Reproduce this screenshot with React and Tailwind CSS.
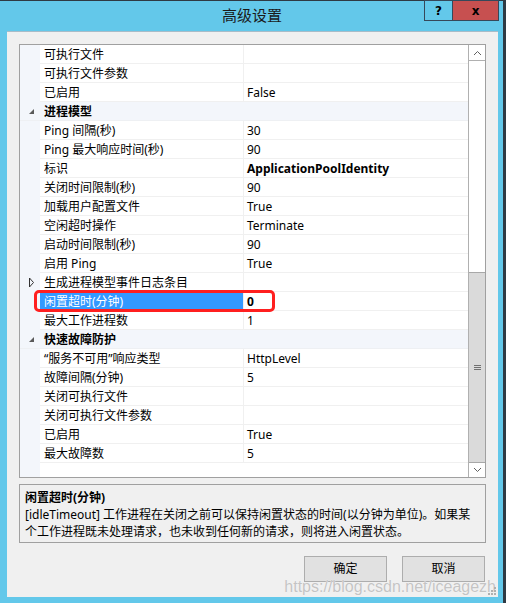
import React from "react";

const rows = [
  { name: "可执行文件", value: "" },
  { name: "可执行文件参数", value: "" },
  { name: "已启用", value: "False" },
  { category: "进程模型" },
  { name: "Ping 间隔(秒)", value: "30" },
  { name: "Ping 最大响应时间(秒)", value: "90" },
  { name: "标识", value: "ApplicationPoolIdentity", bold: true },
  { name: "关闭时间限制(秒)", value: "90" },
  { name: "加载用户配置文件", value: "True" },
  { name: "空闲超时操作", value: "Terminate" },
  { name: "启动时间限制(秒)", value: "90" },
  { name: "启用 Ping", value: "True" },
  { name: "生成进程模型事件日志条目", value: "", collapsed: true },
  { name: "闲置超时(分钟)", value: "0", bold: true, selected: true },
  { name: "最大工作进程数", value: "1" },
  { category: "快速故障防护" },
  { name: "“服务不可用”响应类型", value: "HttpLevel" },
  { name: "故障间隔(分钟)", value: "5" },
  { name: "关闭可执行文件", value: "" },
  { name: "关闭可执行文件参数", value: "" },
  { name: "已启用", value: "True" },
  { name: "最大故障数", value: "5" },
];

const font = "font-['Noto_Sans','Noto_Sans_CJK_SC',sans-serif]";

function ExpandedArrow() {
  return (
    <svg width="7" height="7" viewBox="0 0 7 7">
      <polygon points="6,1 6,6 1,6" fill="#5a5a5a" />
    </svg>
  );
}

function CollapsedArrow() {
  return (
    <svg width="7" height="11" viewBox="0 0 7 11">
      <polygon points="1.5,1 5.5,5.5 1.5,10" fill="none" stroke="#333" strokeWidth="1" />
    </svg>
  );
}

function Row({ row }) {
  if (row.category) {
    return (
      <div className="flex h-[19px] bg-[#f3f6fb] border-b border-[#eef0f3]">
        <div className="w-[20px] flex items-center justify-center pl-[2px]">
          <ExpandedArrow />
        </div>
        <div className="flex-1 pl-[4px] pt-[2px] flex items-center font-bold text-[12px] text-black">
          {row.category}
        </div>
      </div>
    );
  }
  return (
    <div className="flex h-[19px]">
      <div className="w-[20px] bg-[#f3f6fb] flex items-center justify-center pl-[2px]">
        {row.collapsed && <CollapsedArrow />}
      </div>
      <div
        className={`w-[203px] pl-[4px] pt-[2px] flex items-center text-[12px] whitespace-nowrap border-b ${
          row.selected
            ? "bg-[#3399ff] text-white border-[#3399ff]"
            : "text-black border-[#f0f0f0]"
        }`}
      >
        {row.name}
      </div>
      <div
        className={`flex-1 pl-[3px] pt-[2px] flex items-center text-[12px] text-black whitespace-nowrap border-l border-b border-[#f0f0f0] ${
          row.bold ? "font-bold" : ""
        }`}
      >
        {row.value}
      </div>
    </div>
  );
}

function Scrollbar() {
  return (
    <div className="w-[17px] flex flex-col border-l border-[#b0b0b0] bg-white">
      <div className="h-[16px] flex items-center justify-center border-b border-[#b0b0b0]">
        <svg width="9" height="6" viewBox="0 0 9 6">
          <polyline points="1,5 4.5,1.5 8,5" fill="none" stroke="#606060" strokeWidth="1" />
        </svg>
      </div>
      <div className="h-[211px]" />
      <div className="flex-1 bg-[#dadada] border-y border-[#a8a8a8] flex items-center justify-center">
        <div className="flex flex-col gap-[1px]">
          <div className="w-[7px] h-[1px] bg-[#707070]" />
          <div className="w-[7px] h-[1px] bg-[#707070]" />
          <div className="w-[7px] h-[1px] bg-[#707070]" />
        </div>
      </div>
      <div className="h-[14px] flex items-center justify-center">
        <svg width="9" height="6" viewBox="0 0 9 6">
          <polyline points="1,1 4.5,4.5 8,1" fill="none" stroke="#606060" strokeWidth="1" />
        </svg>
      </div>
    </div>
  );
}

export default function App() {
  return (
    <div className={`w-[506px] h-[603px] bg-[#63c8ea] flex flex-col border-t border-r-[3px] border-[#2f3a44] ${font}`}>
      {/* title bar */}
      <div className="relative h-[30px] flex items-center justify-center">
        <span className="text-[15px] text-[#1a1a1a] pl-[1px] -mt-[1px]">高级设置</span>
        <div className="absolute right-[4px] -top-[1px] flex">
          <div className="w-[29px] h-[21px] border border-[#36485a] flex items-center justify-center font-['DejaVu_Sans',sans-serif] font-bold text-[12px] text-black">
            ?
          </div>
          <div className="w-[46px] h-[21px] bg-[#c75050] border border-l-0 border-[#36485a] flex items-center justify-center font-['DejaVu_Sans',sans-serif] font-bold text-[12px] text-black">
            x
          </div>
        </div>
      </div>

      {/* client area */}
      <div className="relative ml-[7px] mr-[5px] h-[566px] bg-[#f0f0f0] border-t border-[#a8bcc8] pt-[12px] px-[12px] flex flex-col">
        {/* property grid */}
        <div className="h-[434px] border border-[#a0a0a0] bg-white flex">
          <div className="relative flex-1 flex flex-col">
            {rows.map((row, i) => (
              <Row key={i} row={row} />
            ))}
            <div className="flex-1 flex">
              <div className="w-[20px] bg-[#f3f6fb]" />
              <div className="flex-1" />
            </div>
            <div className="absolute left-[14px] top-[245px] w-[241px] h-[22px] border-[3px] border-[#ff1f1f] rounded-[5px]" />
          </div>
          <Scrollbar />
        </div>

        {/* description */}
        <div className="mt-[6px] h-[59px] border border-[#a0a0a0] px-[5px] pt-[4px] text-[12px] leading-[17px] text-black">
          <div className="font-bold">闲置超时(分钟)</div>
          <div className="whitespace-nowrap">[idleTimeout] 工作进程在关闭之前可以保持闲置状态的时间(以分钟为单位)。如果某</div>
          <div>个工作进程既未处理请求，也未收到任何新的请求，则将进入闲置状态。</div>
        </div>

        {/* buttons */}
        <div className="mt-[13px] flex justify-end gap-[15px] pr-[1px]">
          <button className="w-[83px] h-[26px] bg-[#e1e1e1] border border-[#adadad] text-[12px] text-black">
            确定
          </button>
          <button className="w-[83px] h-[26px] bg-[#e1e1e1] border border-[#adadad] text-[12px] text-black">
            取消
          </button>
        </div>

        <div className="absolute right-[2px] bottom-[1px] text-[16px] leading-[18px] text-[#c4c4c4] font-['Liberation_Sans',sans-serif] [text-shadow:0_0_1px_#fff]">
          https://blog.csdn.net/iceagezh
        </div>
        <div className="absolute right-[2px] bottom-[2px] grid grid-cols-3 gap-[1px]">
          <div />
          <div />
          <div className="w-[2px] h-[2px] bg-[#b0b0b0]" />
          <div />
          <div className="w-[2px] h-[2px] bg-[#b0b0b0]" />
          <div className="w-[2px] h-[2px] bg-[#b0b0b0]" />
          <div className="w-[2px] h-[2px] bg-[#b0b0b0]" />
          <div className="w-[2px] h-[2px] bg-[#b0b0b0]" />
          <div className="w-[2px] h-[2px] bg-[#b0b0b0]" />
        </div>
      </div>
    </div>
  );
}
